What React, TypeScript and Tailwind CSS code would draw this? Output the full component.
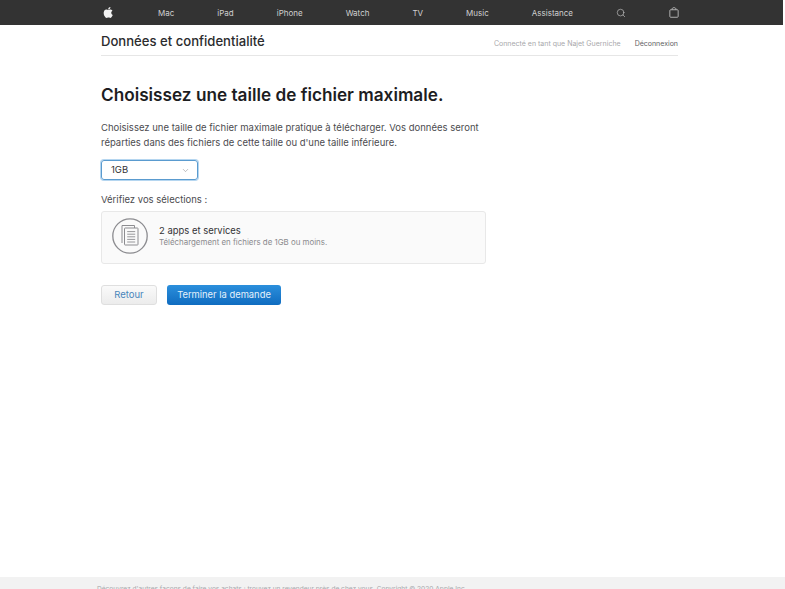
import { ChevronDown, Search } from "lucide-react";

const navItems = ["Mac", "iPad", "iPhone", "Watch", "TV", "Music", "Assistance"];

const AppleLogo = () => (
  <svg viewBox="0 0 24 24" className="w-[13px] h-[15px] fill-[#f2f2f2] mb-[1px]">
    <path d="M17.05 12.54c-.03-2.6 2.12-3.85 2.22-3.91-1.21-1.77-3.09-2.01-3.76-2.04-1.6-.16-3.12.94-3.93.94-.81 0-2.06-.92-3.39-.89-1.74.03-3.35 1.01-4.25 2.57-1.81 3.14-.46 7.8 1.3 10.35.86 1.25 1.89 2.65 3.24 2.6 1.3-.05 1.79-.84 3.36-.84s2.01.84 3.39.81c1.4-.02 2.28-1.27 3.14-2.53.99-1.45 1.4-2.86 1.42-2.93-.03-.01-2.72-1.04-2.74-4.13zM14.46 4.9c.72-.87 1.2-2.08 1.07-3.28-1.03.04-2.28.69-3.02 1.56-.66.77-1.24 2-1.09 3.18 1.15.09 2.33-.59 3.04-1.46z" />
  </svg>
);

const BagIcon = () => (
  <svg viewBox="0 0 12 13" fill="none" className="w-[10px] h-[11px] stroke-[#c8c8c8]">
    <rect x="1" y="3.2" width="10" height="9" rx="1" />
    <path d="M3.8 3V2.2C3.8 1.3 4.6.7 6 .7s2.2.6 2.2 1.5V3" />
  </svg>
);

const DocumentsIcon = () => (
  <svg viewBox="0 0 36 36" fill="none" className="w-9 h-9 stroke-[#8c8c90]">
    <circle cx="18" cy="18" r="17.2" strokeWidth="1.3" />
    <path d="M10 25V7.5h12.5V10" strokeWidth="1" />
    <rect x="12.5" y="10" width="13.5" height="17" rx="0.6" strokeWidth="1" />
    <path d="M15.2 13.6h8M15.2 16.2h8M15.2 18.8h8M15.2 21.4h8M15.2 24h8" strokeWidth="0.9" />
  </svg>
);

export default function App() {
  return (
    <div
      className="h-[589px] overflow-hidden bg-white flex flex-col text-[#333336]"
      style={{ fontFamily: "Inter, 'Liberation Sans', sans-serif" }}
    >
      <header className="h-[25px] w-[783px] shrink-0 bg-[#333333] pl-[102px] pr-[104px] flex items-center justify-between text-[8px] text-[#d0d0d0]">
        <AppleLogo />
        {navItems.map((item) => (
          <a key={item} href="#" className="mt-[1px]">
            {item}
          </a>
        ))}
        <Search className="w-[10px] h-[10px] text-[#c8c8c8]" strokeWidth={1.5} />
        <BagIcon />
      </header>

      <main className="flex-1 pl-[101px]">
        <div className="w-[577px] h-[31px] border-b border-[#e6e6e6] flex items-center justify-between pt-[3px]">
          <h2 className="text-[13.1px] font-medium text-[#2b2b2d]">Données et confidentialité</h2>
          <div className="flex gap-[14px] text-[7px] mt-[6px]">
            <span className="text-[#a8a8ab]">Connecté en tant que Najet Guerniche</span>
            <a href="#" className="text-[#5f5f63]">Déconnexion</a>
          </div>
        </div>

        <h1 className="mt-[26px] text-[17.2px] leading-[26px] font-semibold text-[#1d1d1f]">
          Choisissez une taille de fichier maximale.
        </h1>
        <p className="mt-[12px] w-[390px] text-[9.5px] leading-[15px] text-[#4c4c50]">
          Choisissez une taille de fichier maximale pratique à télécharger. Vos données seront
          réparties dans des fichiers de cette taille ou d'une taille inférieure.
        </p>

        <div className="mt-[10px] w-[97px] h-[20px] rounded-[3px] border border-[#5a9bcf] shadow-[0_0_0_1px_#b5d6f0] pl-[9px] pr-[7px] flex items-center justify-between text-[9.5px] text-[#333336]">
          <span>1GB</span>
          <ChevronDown className="w-[9px] h-[9px] text-[#8e8e93]" strokeWidth={1.5} />
        </div>

        <p className="mt-[12px] text-[9.5px] leading-[15px] text-[#4c4c50]">Vérifiez vos sélections :</p>

        <section className="mt-[4px] w-[385px] h-[53px] rounded-[3px] border border-[#e8e8e8] bg-[#fafafa] pl-[10px] pb-[3px] flex items-center gap-[11px]">
          <DocumentsIcon />
          <div>
            <p className="text-[9.45px] leading-[13px] text-[#333336]">2 apps et services</p>
            <p className="text-[7.9px] leading-[11px] text-[#8a8a8e]">
              Téléchargement en fichiers de 1GB ou moins.
            </p>
          </div>
        </section>

        <div className="mt-[21px] flex gap-[10px]">
          <button className="w-[56px] h-[20px] rounded-[3px] border border-[#dfdfdf] bg-gradient-to-b from-[#fafafa] to-[#ececec] text-[9.5px] text-[#4a86bb]">
            Retour
          </button>
          <button className="w-[114px] h-[20px] rounded-[3px] bg-gradient-to-b from-[#2b8fdc] to-[#0f6cc0] text-[9.4px] text-[#e4f1fb]">
            Terminer la demande
          </button>
        </div>
      </main>

      <footer className="h-[12px] shrink-0 bg-[#f2f2f2] pl-[97px] pt-[8px] text-[6.6px] leading-[8px] text-[#a8a8ac] whitespace-nowrap">
        Découvrez d'autres façons de faire vos achats : trouvez un revendeur près de chez vous. Copyright © 2020 Apple Inc.
      </footer>
    </div>
  );
}
